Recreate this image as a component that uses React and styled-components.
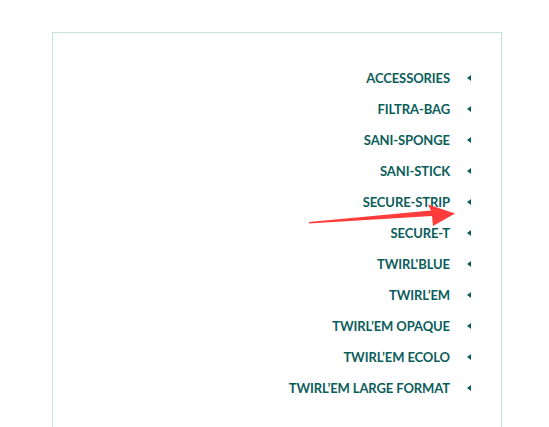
import React from 'react';
import styled, { createGlobalStyle } from 'styled-components';

const GlobalStyle = createGlobalStyle`
  body {
    margin: 0;
    background: #ffffff;
    font-family: Lato, "Liberation Sans", sans-serif;
  }
`;

const Page = styled.div`
  position: relative;
  height: 427px;
  overflow: hidden;
`;

const Panel = styled.div`
  margin: 32px 0 0 52px;
  width: 450px;
  height: 420px;
  box-sizing: border-box;
  border: 1px solid #c6e1da;
  border-bottom: none;
  padding: 29px 30px 0 0;
`;

const Menu = styled.ul`
  list-style: none;
  margin: 0;
  padding: 0;
  display: flex;
  flex-direction: column;
  align-items: flex-end;
`;

const Item = styled.li`
  height: 31px;
  display: flex;
  align-items: center;
  gap: 17px;
  font-size: 13px;
  font-weight: 700;
  color: #0b5d5b;
  letter-spacing: -0.1px;
`;

const Caret = styled.span`
  width: 0;
  height: 0;
  border-top: 3.5px solid transparent;
  border-bottom: 3.5px solid transparent;
  border-right: 4px solid #0b5d5b;
  margin-top: 1px;
`;

const Annotation = styled.svg`
  position: absolute;
  left: 0;
  top: 0;
  pointer-events: none;
`;

const items = [
  'ACCESSORIES',
  'FILTRA-BAG',
  'SANI-SPONGE',
  'SANI-STICK',
  'SECURE-STRIP',
  'SECURE-T',
  "TWIRL'BLUE",
  'TWIRL’EM',
  'TWIRL’EM OPAQUE',
  'TWIRL’EM ECOLO',
  'TWIRL’EM LARGE FORMAT',
];

export default function App() {
  return (
    <Page>
      <GlobalStyle />
      <Panel>
        <Menu>
          {items.map(name => (
            <Item key={name}>
              {name}
              <Caret />
            </Item>
          ))}
        </Menu>
      </Panel>
      <Annotation width="549" height="427" viewBox="0 0 549 427">
        <polygon
          points="309,222 431,210.5 428,204.5 455,213.5 433,226 432,216 309,223.5"
          fill="#ff3b3b"
        />
      </Annotation>
    </Page>
  );
}
